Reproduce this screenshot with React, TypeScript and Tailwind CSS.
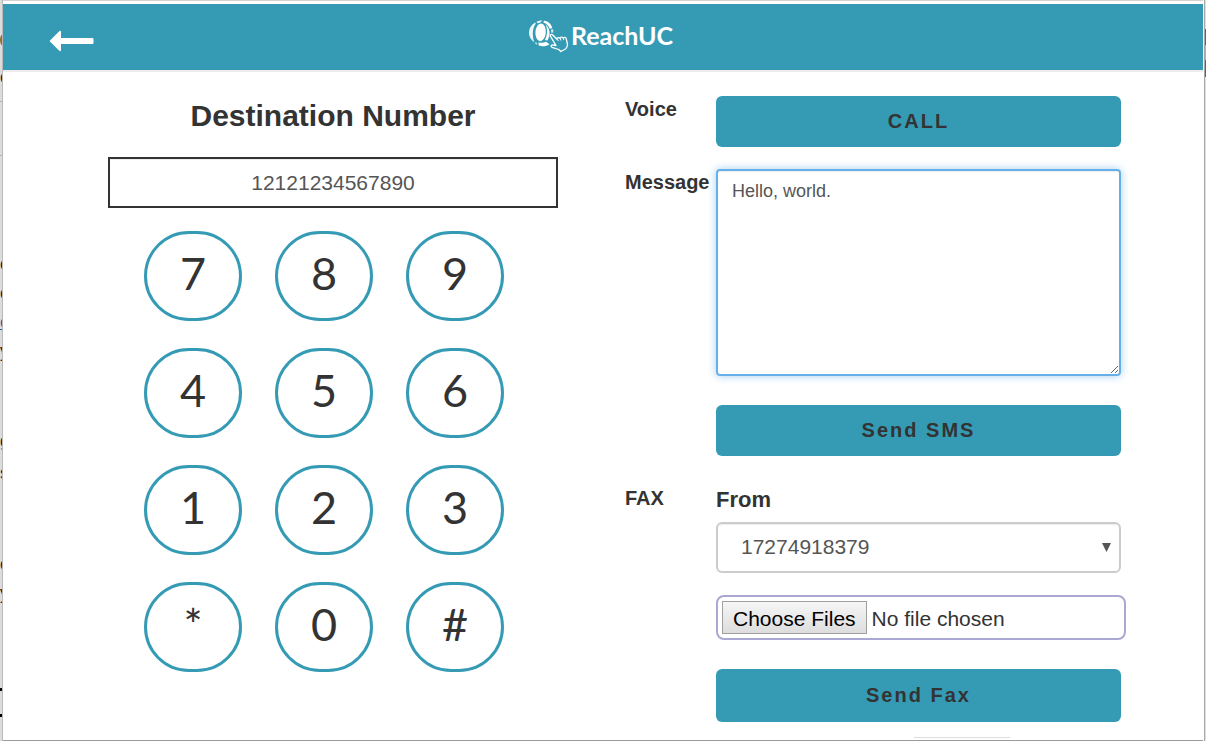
import React, { useState } from 'react';

const KEYS = ['7', '8', '9', '4', '5', '6', '1', '2', '3', '*', '0', '#'];

const FAX_NUMBERS = ['17274918379'];

const ACTION_BUTTON = 'block w-full rounded-md bg-[#359bb5] pb-0.5 text-xl leading-6 font-bold tracking-[2px] text-[#333333] hover:bg-[#2d8aa2] cursor-pointer';

const Logo: React.FC = () => (
    <div className="flex items-start pr-1">
        <svg width="42" height="34" viewBox="0 0 42 34" fill="none" aria-hidden="true">
            {/* globe panels */}
            <g fill="#fff">
                <path d="M6.200 2.600C-2 7.500 -1.800 17.500 5.300 22.200C3 15.500 3.200 8.500 6.800 3.500Z" fillOpacity=".92" />
                <path d="M7.600 2C9.300 .8 11.500 .3 13.300 .5L11 2.600L8.600 3.300Z" />
                <ellipse cx="11.600" cy="12.300" rx="5.200" ry="8.900" transform="rotate(4 11.600 12.300)" />
                <path d="M15 .700C19.500 1.300 22.500 4.200 23.300 8L20.800 8.800C19.800 6 17.800 3.500 14.300 2.400Z" />
                <path d="M16.500 4.200C21.200 8.500 21.800 14.500 18.500 20.500L15.800 20C18.500 15.500 18.800 9 16.500 4.200Z" />
                <path d="M22 9.600L24.200 9.200L24.300 12.500L22.300 12.800Z" fillOpacity=".8" />
                <path d="M9.300 22.500C12 23.300 15 22.500 17 21.700L20.500 24.200C17 26.400 13 26.700 9.800 25.500Z" />
                <path d="M5.800 23L7.200 22.300L8.400 24.900Z" />
            </g>
            {/* pointing hand */}
            <path
                d="M21.500 16.300C20.500 15.200 22.300 13.600 23.500 14.800L28 19.200C28 17.500 29.800 17 31 18.300C31.500 16.900 33.200 16.900 34.200 18C35.200 16.800 37 17.300 37.300 18.800L38.500 24.500C38.500 27 37.500 28 36.500 29L31.800 31.500L29.800 29.500L23 27.300C21.300 26.500 22.300 24.600 24 25L27 25.500Z"
                fill="#359bb5"
                stroke="#fff"
                strokeWidth="1.300"
                strokeLinejoin="round"
            />
            <path d="M28 19.200L29.500 21M31 18.300L32 20.500M34.200 18L34.800 20" stroke="#fff" strokeWidth="1" />
        </svg>
        <span className="font-[Lato,sans-serif] text-[25px] leading-[30px] font-bold text-white">ReachUC</span>
    </div>
);

// Sliver of the page that sits behind the popup, left side
const LeftBackdrop: React.FC = () => (
    <div aria-hidden="true" className="w-[3px] shrink-0 overflow-hidden border-r border-[#b9b9b9] bg-[#dcdcdc] text-lg leading-5 text-[#222222]">
        <div className="mt-[31px] h-[18px] w-5 rounded-full border-2 border-[#9a6426]" />
        <div className="mt-[18px] h-5">o</div>
        <div className="mt-[14px] h-px bg-[#b0b0b0]" />
        <div className="mt-[53px] h-px bg-[#b0b0b0]" />
        <div className="mt-[98px] h-5">c</div>
        <div className="mt-[9px] h-5">e</div>
        <div className="mt-[9px] h-5 text-[#1a56c4] underline">c</div>
        <div className="mt-[9px] h-5">y</div>
        <div className="mt-[70px] h-5">g</div>
        <div className="mt-[12px] h-5">s</div>
        <div className="mt-[71px] h-5">o</div>
        <div className="mt-[9px] h-5">y</div>
        <div className="mt-[85px] h-[29px] border-y-[3px] border-black" />
    </div>
);

const RightBackdrop: React.FC = () => (
    <div aria-hidden="true" className="flex w-[3px] shrink-0 border-l border-white bg-[#dedede]">
        <div className="w-px bg-[#a8a8a8]" />
        <div className="flex-1">
            <div className="h-[29px]" />
            <div className="h-4 bg-[#3367c8]" />
            <div className="h-[15px] bg-[#b9a6bd]" />
            <div className="h-[17px] bg-[#3367c8]" />
        </div>
    </div>
);

export default function App() {
    const [destination, setDestination] = useState('12121234567890');
    const [message, setMessage] = useState('Hello, world.');
    const [faxFrom, setFaxFrom] = useState(FAX_NUMBERS[0]);

    return (
        <div className="flex min-h-screen bg-white font-['Liberation_Sans',Arial,sans-serif] text-[#333333]">
            <LeftBackdrop />
            <div className="flex min-w-0 flex-1 flex-col border-t border-b border-t-[#d3d3d3] border-b-[#9b9b9b] bg-white">
                <header className="mt-[3px] grid h-[68px] grid-cols-[1fr_auto_1fr] items-start border-b-2 border-[#ededed] bg-[#359bb5] pt-4">
                    <button type="button" aria-label="Back" className="ml-[46px] mt-[10px] w-fit cursor-pointer">
                        <svg width="45" height="22" viewBox="0 0 45 22" fill="#fff">
                            <path d="M0.500 11L10 1.500Q12 0 12 2V8H43.500Q44.500 8 44.500 9V13Q44.500 14 43.500 14H12V20Q12 22 10 20.500Z" />
                        </svg>
                    </button>
                    <Logo />
                </header>

                <main className="grid grid-cols-2 pt-6">
                    <section className="pl-[105px] pr-[45px]">
                        <h1 className="text-center text-3xl leading-10 font-bold">
                            <label htmlFor="destination">Destination Number</label>
                        </h1>
                        <input
                            id="destination"
                            type="tel"
                            value={destination}
                            onChange={e => setDestination(e.target.value)}
                            className="mt-[21px] block h-[51px] w-full border-2 border-[#333333] text-center text-[21px] text-[#555555] shadow-[inset_0_1px_1px_rgba(0,0,0,0.075)] outline-none"
                        />
                        <div className="mt-[23px] mr-[18px] flex justify-center">
                            <div className="grid grid-cols-3 gap-x-[33px] gap-y-[27px]">
                                {KEYS.map(key => (
                                    <button
                                        key={key}
                                        type="button"
                                        onClick={() => setDestination(destination + key)}
                                        className="h-[90px] w-[98px] cursor-pointer rounded-[45px] border-3 border-[#359bb5] bg-white pb-1.5 font-[Lato,sans-serif] text-[45px] leading-none"
                                    >
                                        {key}
                                    </button>
                                ))}
                            </div>
                        </div>
                    </section>

                    <section className="grid grid-cols-[91px_1fr] content-start pl-[22px] pr-[82px]">
                        <h2 className="text-xl leading-[26px] font-bold">Voice</h2>
                        <button type="button" className={`${ACTION_BUTTON} h-[51px]`}>CALL</button>

                        <label htmlFor="message" className="mt-[22px] text-xl leading-[26px] font-bold">Message</label>
                        <div className="mt-[22px]">
                            <textarea
                                id="message"
                                value={message}
                                onChange={e => setMessage(e.target.value)}
                                className="block h-[207px] w-full resize rounded border-2 border-[#66afe9] px-[14px] py-2 text-lg leading-6 text-[#555555] shadow-[inset_0_1px_1px_rgba(0,0,0,0.075),0_0_8px_rgba(102,175,233,0.6)] outline-none"
                            />
                            <button type="button" className={`${ACTION_BUTTON} mt-[29px] h-[51px]`}>Send SMS</button>
                        </div>

                        <h2 className="mt-[29px] text-xl leading-[26px] font-bold">FAX</h2>
                        <div className="mt-[29px]">
                            <label htmlFor="fax-from" className="block text-[22px] leading-[30px] font-bold">From</label>
                            <div className="relative mt-[7px]">
                                <select
                                    id="fax-from"
                                    value={faxFrom}
                                    onChange={e => setFaxFrom(e.target.value)}
                                    className="block h-[51px] w-full appearance-none rounded-md border-2 border-[#cccccc] bg-white pb-0.5 pl-[23px] text-[21px] text-[#555555] shadow-[inset_0_1px_1px_rgba(0,0,0,0.075)] outline-none"
                                >
                                    {FAX_NUMBERS.map(n => <option key={n} value={n}>{n}</option>)}
                                </select>
                                <svg className="pointer-events-none absolute top-5 right-[10px]" width="9" height="10" viewBox="0 0 9 10" fill="#555">
                                    <path d="M0 1H9L4.500 10Z" />
                                </svg>
                            </div>
                            <input
                                type="file"
                                multiple
                                aria-label="Fax files"
                                className="mt-[22px] -mr-[5px] block h-[45px] w-[calc(100%+5px)] rounded-lg border-2 border-[#aaa8d2] p-1 text-[21px] leading-[33px] file:mr-[5px] file:h-[33px] file:rounded-none file:border file:border-solid file:border-[#a0a0a0] file:bg-linear-to-b file:from-[#f6f6f6] file:to-[#dddddd] file:px-[10px] file:pb-0.5 file:text-black"
                            />
                            <button type="button" className={`${ACTION_BUTTON} mt-[29px] h-[53px]`}>Send Fax</button>
                            <div className="mx-auto mt-[15px] h-px w-24 translate-x-[43px] bg-[#dddddd]" />
                        </div>
                    </section>
                </main>
            </div>
            <RightBackdrop />
        </div>
    );
}
